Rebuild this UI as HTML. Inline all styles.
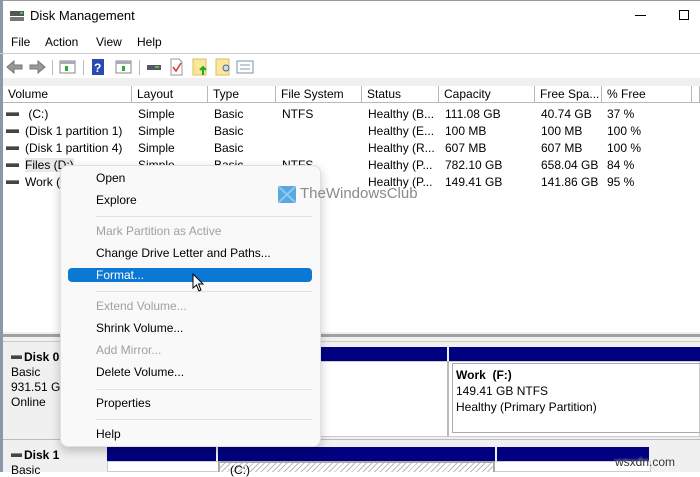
<!DOCTYPE html>
<html><head><meta charset="utf-8"><style>
*{margin:0;padding:0;box-sizing:border-box}
body{width:700px;height:472px;overflow:hidden;background:#fff;font-family:"Liberation Sans",sans-serif;font-size:12px;color:#000;position:relative}
.a{position:absolute;white-space:nowrap}
.hdr{position:absolute;top:86px;height:17px;border-right:1px solid #b8b8b8;border-bottom:1px solid #b8b8b8;padding-left:5px;line-height:16px;background:#fff}
.drv{display:inline-block;width:13px;height:4px;background:#444;border-top:1px solid #888;vertical-align:middle;margin-right:6px;position:relative;top:-1px}
.mi{position:absolute;left:96px;font-size:12px}
.dis{color:#a0a0a0}
.sep{position:absolute;left:96px;width:216px;height:1px;background:#e3e3e3}
.navy{position:absolute;background:#000080}
</style></head><body>
<div class="a" style="left:0;top:0;width:700px;height:1px;background:#999"></div>
<div class="a" style="left:0;top:0;width:3px;height:472px;background:#8a98a8"></div>
<svg class="a" style="left:9px;top:9px" width="16" height="14"><rect x="1" y="2" width="14" height="5" fill="#555"/><rect x="1" y="8" width="14" height="4" fill="#777"/><rect x="11" y="3" width="3" height="2" fill="#4c4"/></svg>
<div class="a" style="left:30px;top:8px;font-size:13px">Disk Management</div>
<div class="a" style="left:635px;top:15px;width:11px;height:1px;background:#000"></div>
<div class="a" style="left:679px;top:10px;width:10px;height:10px;border:1px solid #000"></div>
<div class="a" style="left:11px;top:35px">File</div>
<div class="a" style="left:45px;top:35px">Action</div>
<div class="a" style="left:96px;top:35px">View</div>
<div class="a" style="left:137px;top:35px">Help</div>
<div class="a" style="left:0;top:53px;width:700px;height:1px;background:#ccc"></div>
<svg class="a" style="left:5px;top:57px" width="250" height="20">
<path d="M2 10 L9 4 V8 H17 V12 H9 V16 Z" fill="#999" stroke="#777"/>
<path d="M40 10 L33 4 V8 H25 V12 H33 V16 Z" fill="#999" stroke="#777"/>
<rect x="47" y="3" width="1" height="15" fill="#bbb"/>
<rect x="55" y="4" width="15" height="12" fill="#fff" stroke="#888"/><rect x="55" y="4" width="15" height="3" fill="#aab"/><rect x="60" y="9" width="3" height="5" fill="#3a3"/>
<rect x="78" y="3" width="1" height="15" fill="#bbb"/>
<rect x="87" y="2" width="12" height="16" fill="#2a4ab0"/><text x="89" y="15" fill="#fff" font-size="12" font-family="Liberation Sans" font-weight="bold">?</text>
<rect x="111" y="4" width="15" height="12" fill="#fff" stroke="#888"/><rect x="111" y="4" width="15" height="3" fill="#aab"/><rect x="117" y="9" width="3" height="5" fill="#3a3"/>
<rect x="134" y="3" width="1" height="15" fill="#bbb"/>
<rect x="142" y="8" width="14" height="5" fill="#556"/><rect x="150" y="9" width="4" height="2" fill="#4c4"/>
<path d="M166 2 H174 L177 5 V18 H166 Z" fill="#fff" stroke="#999"/><path d="M168 10 L171 14 L176 6" stroke="#d33" fill="none" stroke-width="1.5"/>
<rect x="188" y="2" width="13" height="16" fill="#fbe79a" stroke="#d8c060"/><path d="M198 18 V11 M195 13 L198 10 L201 13" stroke="#2a2" stroke-width="2" fill="none"/>
<rect x="211" y="2" width="13" height="16" fill="#fbe79a" stroke="#d8c060"/><circle cx="221" cy="11" r="3" fill="#cde" stroke="#567"/>
<rect x="232" y="4" width="16" height="12" fill="#fff" stroke="#7890a8"/><path d="M235 8 H245 M235 12 H245" stroke="#89a"/>
</svg>
<div class="a" style="left:3px;top:78px;width:697px;height:8px;background:#f0f0f0"></div>
<div class="hdr" style="left:3px;width:129px">Volume</div>
<div class="hdr" style="left:132px;width:76px">Layout</div>
<div class="hdr" style="left:208px;width:68px">Type</div>
<div class="hdr" style="left:276px;width:86px">File System</div>
<div class="hdr" style="left:362px;width:77px">Status</div>
<div class="hdr" style="left:439px;width:96px">Capacity</div>
<div class="hdr" style="left:535px;width:67px">Free Spa...</div>
<div class="hdr" style="left:602px;width:90px">% Free</div>
<div class="hdr" style="left:692px;width:8px"></div>
<div class="a" style="left:6px;top:106px;line-height:17px">
<div><span class="drv"></span> (C:)</div><div><span class="drv"></span>(Disk 1 partition 1)</div><div><span class="drv"></span>(Disk 1 partition 4)</div><div><span class="drv"></span><span style="background:#e8e8e8">Files (D:)</span></div><div><span class="drv"></span>Work (F:)</div></div>
<div class="a" style="left:138px;top:106px;line-height:17px">Simple<br>Simple<br>Simple<br>Simple<br>Simple</div>
<div class="a" style="left:214px;top:106px;line-height:17px">Basic<br>Basic<br>Basic<br>Basic<br>Basic</div>
<div class="a" style="left:282px;top:106px;line-height:17px">NTFS<br><br><br>NTFS<br>NTFS</div>
<div class="a" style="left:368px;top:106px;line-height:17px">Healthy (B...<br>Healthy (E...<br>Healthy (R...<br>Healthy (P...<br>Healthy (P...</div>
<div class="a" style="left:445px;top:106px;line-height:17px">111.08 GB<br>100 MB<br>607 MB<br>782.10 GB<br>149.41 GB</div>
<div class="a" style="left:541px;top:106px;line-height:17px">40.74 GB<br>100 MB<br>607 MB<br>658.04 GB<br>141.86 GB</div>
<div class="a" style="left:607px;top:106px;line-height:17px">37 %<br>100 %<br>100 %<br>84 %<br>95 %</div>
<div class="a" style="left:3px;top:332px;width:697px;height:140px;background:#f0f0f0"></div>
<div class="a" style="left:3px;top:334px;width:697px;height:3px;background:#a0a0a0"></div>
<div class="a" style="left:3px;top:341px;width:697px;height:1px;background:#ccc"></div>
<div class="a" style="left:11px;top:350px;font-weight:bold"><span class="drv" style="width:11px;margin-right:2px"></span>Disk 0</div>
<div class="a" style="left:11px;top:365px;line-height:15px">Basic<br>931.51 GB<br>Online</div>
<div class="navy" style="left:107px;top:347px;width:340px;height:14px"></div>
<div class="navy" style="left:449px;top:347px;width:251px;height:14px"></div>
<div class="a" style="left:107px;top:361px;width:593px;height:76px;background:#fff;border:1px solid #ccc"></div>
<div class="a" style="left:447px;top:361px;width:2px;height:76px;background:#bbb"></div>
<div class="a" style="left:452px;top:363px;width:248px;height:70px;border:1px solid #aaa;border-right:none"></div>
<div class="a" style="left:456px;top:367px;line-height:16px"><b>Work&nbsp; (F:)</b><br>149.41 GB NTFS<br>Healthy (Primary Partition)</div>
<div class="a" style="left:3px;top:439px;width:697px;height:1px;background:#bbb"></div>
<div class="a" style="left:11px;top:448px;font-weight:bold"><span class="drv" style="width:11px;margin-right:2px"></span>Disk 1</div>
<div class="a" style="left:11px;top:463px">Basic</div>
<div class="navy" style="left:107px;top:447px;width:109px;height:14px"></div>
<div class="navy" style="left:218px;top:447px;width:277px;height:14px"></div>
<div class="navy" style="left:497px;top:447px;width:152px;height:14px"></div>
<div class="a" style="left:107px;top:461px;width:544px;height:11px;background:#fff;border:1px solid #ccc"></div>
<div class="a" style="left:218px;top:461px;width:277px;height:11px;background:repeating-linear-gradient(135deg,#fff 0 3px,#bbb 3px 4px);border:2px solid #aaa;border-bottom:none"></div>
<div class="a" style="left:230px;top:463px">(C:)</div>
<div class="a" style="left:615px;top:455px;font-size:12px;color:#333;text-shadow:0 0 2px #fff">wsxdn.com</div>
<div class="a" style="left:60px;top:165px;width:261px;height:282px;background:#f9f9f9;border:1px solid #e0e0e0;border-radius:8px;box-shadow:0 4px 10px rgba(0,0,0,.22)"></div>
<div class="a" style="left:68px;top:268px;width:244px;height:14px;background:#0b78d4;border-radius:4px"></div>
<div class="mi" style="top:171px">Open</div>
<div class="mi" style="top:193px">Explore</div>
<div class="sep" style="top:216px"></div>
<div class="mi dis" style="top:224px">Mark Partition as Active</div>
<div class="mi" style="top:246px">Change Drive Letter and Paths...</div>
<div class="mi" style="top:268px;color:#fff;line-height:14px">Format...</div>
<div class="sep" style="top:291px"></div>
<div class="mi dis" style="top:299px">Extend Volume...</div>
<div class="mi" style="top:321px">Shrink Volume...</div>
<div class="mi dis" style="top:343px">Add Mirror...</div>
<div class="mi" style="top:365px">Delete Volume...</div>
<div class="sep" style="top:389px"></div>
<div class="mi" style="top:396px">Properties</div>
<div class="sep" style="top:419px"></div>
<div class="mi" style="top:427px">Help</div>
<svg class="a" style="left:278px;top:186px" width="18" height="17"><rect width="18" height="17" fill="#5aa8e0"/><path d="M0 0 L18 17 M18 0 L0 17" stroke="#8ec8f0" stroke-width="2"/></svg>
<div class="a" style="left:300px;top:185px;font-size:15px;color:#8a8a8a">TheWindowsClub</div>
<svg class="a" style="left:192px;top:273px" width="13" height="20"><path d="M1 1 V15 L4.5 12 L7 18 L9 17 L6.5 11 H11 Z" fill="#fff" stroke="#000"/></svg>
</body></html>
